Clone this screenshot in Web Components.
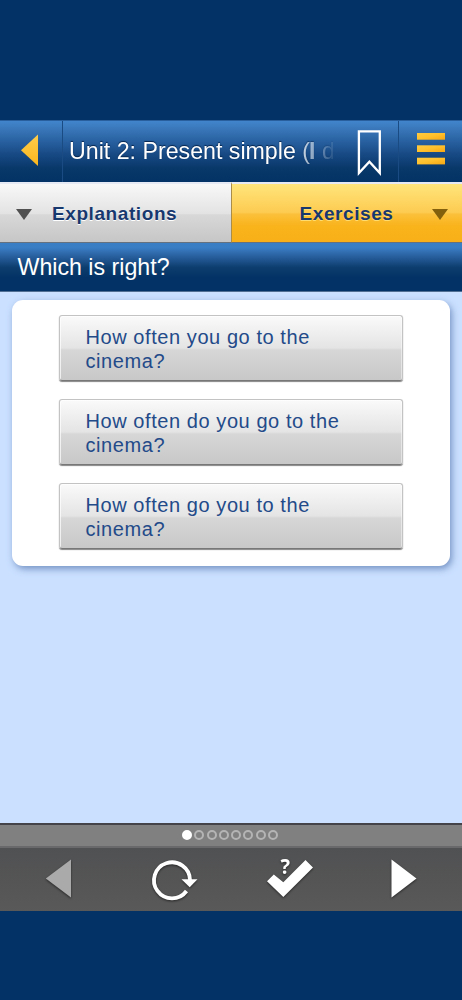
<!DOCTYPE html>
<html lang="en">
<head>
<meta charset="utf-8">
<title>Unit 2: Present simple</title>
<style>
html,body{margin:0;height:100%;background:#033366}
body{font-family:"Liberation Sans",Arial,sans-serif;overflow:hidden}
</style>
</head>
<body>
<grammar-app></grammar-app>
<script>
function define(name, html){
  const t = document.createElement('template');
  t.innerHTML = html;
  customElements.define(name, class extends HTMLElement{
    constructor(){
      super();
      this.attachShadow({mode:'open'}).append(t.content.cloneNode(true));
    }
  });
}

define('unit-header', `
<style>
:host{display:grid;grid-template-columns:62px 1fr 63px;height:62px;box-sizing:border-box;color:#fff;
 border-top:1px solid #2a5f9e;
 background:linear-gradient(#4285cc 0,#3a78bb 12%,#2962a2 32%,#164882 56%,#083769 78%,#033366 100%)}
.cell{display:flex;align-items:center}
.mid{border-left:1px solid #1a4b83;border-right:1px solid #1a4b83;padding-left:6px;min-width:0}
.title{width:264px;overflow:hidden;white-space:nowrap;font-size:23.2px;line-height:30px;margin-top:-1px;
 text-shadow:0 -1px 1px #04234b;
 -webkit-mask-image:linear-gradient(90deg,#000 225px,rgba(0,0,0,.6) 240px,transparent 268px);
 mask-image:linear-gradient(90deg,#000 225px,rgba(0,0,0,.6) 240px,transparent 268px)}
svg{display:block;flex:none}
</style>
<div class="cell"><svg width="62" height="61" viewBox="0 0 62 61">
<defs><linearGradient id="a" x2="0" y2="1"><stop stop-color="#ffcd4c"/><stop offset="1" stop-color="#fbb61c"/></linearGradient></defs>
<path d="M38 13.500V45L21 29.300Z" fill="url(#a)"/></svg></div>
<div class="cell mid"><div class="title"><slot></slot></div>
<svg width="64" height="61" viewBox="-3.700 0 64 61"><path d="M22.200 10.400H43.100V52L32.700 40.800L22.200 52Z" fill="none" stroke="#fff" stroke-width="2.300"/></svg></div>
<div class="cell"><svg width="63" height="61" viewBox="0 0 63 61">
<defs><linearGradient id="b" x2="1" y2="1"><stop stop-color="#ffcb42"/><stop offset=".5" stop-color="#ffc02c"/><stop offset="1" stop-color="#f6a713"/></linearGradient></defs>
<g fill="url(#b)"><rect x="18" y="12" width="28" height="6.700"/><rect x="18" y="24.300" width="28" height="6.700"/><rect x="18" y="36.700" width="28" height="6.700"/></g></svg></div>`);

define('mode-tab', `
<style>
:host{display:flex;align-items:center;box-sizing:border-box;height:61px;border-top:2px solid #e4e9f3;border-bottom:1px solid #65717f;
 color:#17386f;font-weight:bold;font-size:19px;letter-spacing:.58px;padding:0 13px 1px 16px;
 background:linear-gradient(#f8f8f8 0,#e3e3e3 51%,#d8d8d8 53%,#c6c6c6 100%);text-shadow:0 1px 0 #fff}
:host([active]){flex-direction:row-reverse;border-left:1px solid #a98d48;padding:0 14px 1px 0;
 background:linear-gradient(#ffe57b 0,#fdcb51 49%,#fbc03a 52%,#f9b31b 73%,#f9b018 100%);text-shadow:0 1px 0 #ffdc70}
svg{width:16px;height:11px;fill:#505050;margin:3px 20px 0 0}
:host([active]) svg{fill:#83600c;margin:3px 0 0 38.500px}
span{line-height:24px;margin-top:2px}
</style>
<svg viewBox="0 0 16 11"><path d="M0 0H16L8 11Z"/></svg><span><slot></slot></span>`);

define('mode-tabs', `
<style>:host{display:grid;grid-template-columns:231px 231px}</style>
<slot></slot>`);

define('question-bar', `
<style>:host{display:flex;align-items:center;box-sizing:border-box;height:49px;padding:0 17.500px;color:#fff;font-size:23.2px;
 border-bottom:1px solid #526f94;background:linear-gradient(#397fc5 0,#3a7dc3 10%,#2961a0 27%,#0d3d6e 51%,#033366 72%,#033366 100%)}</style>
<slot></slot>`);

define('answer-option', `
<style>:host{display:block;box-sizing:border-box;width:344px;height:66px;padding:9px 26px;border-radius:3px;
 border:1px solid #c3c3c3;border-bottom:1px solid #777;color:#234a89;font-size:20px;line-height:24px;letter-spacing:.57px;
 background:linear-gradient(#fafafa 0,#e4e4e4 50%,#d7d7d7 53%,#c8c8c8 100%);
 box-shadow:inset 1px 1px 0 rgba(255,255,255,.7),inset -1px 0 0 rgba(255,255,255,.45),0 1px 1px #858585}</style>
<slot></slot>`);

define('answer-card', `
<style>:host{display:flex;flex-direction:column;align-items:center;gap:18px;box-sizing:border-box;margin:8px 12px 0;height:266px;padding-top:15px;
 background:#fff;border-radius:11px;box-shadow:2px 3px 7px #7593c4}
::slotted(*){flex:none;margin-left:-1px}</style>
<slot></slot>`);

define('page-dots', `
<style>:host{display:flex;justify-content:center;align-items:center;box-sizing:border-box;height:25px;border-top:2px solid #444349;border-bottom:2px solid #69696b;
 gap:2.240px;background:#808080;padding:0 2px 2px 0}
i{box-sizing:border-box;width:10px;height:10px;border-radius:50%;border:2px solid #b4b4b4}
i:first-of-type{background:#fff;border-color:#fff}</style>
<i></i><i></i><i></i><i></i><i></i><i></i><i></i><i></i>`);

define('nav-toolbar', `
<style>:host{display:grid;grid-template-columns:repeat(4,1fr);height:63px;background:linear-gradient(#505153,#555 55%,#595959)}
svg{display:block;width:115.500px;height:63px;overflow:visible}
.s{filter:drop-shadow(0 1px 1px rgba(0,0,0,.55))}</style>
<svg viewBox="0 0 115.500 63"><path class="s" d="M71 11.500V49.500L45.800 30.500Z" fill="#aaa"/></svg>
<svg viewBox="115.500 0 115.500 63"><g class="s"><path d="M186 43A18 18 0 1 1 189.500 32" fill="none" stroke="#fff" stroke-width="3.800"/><path d="M181 31.200H197L189.200 39.200Z" fill="#fff"/></g></svg>
<svg viewBox="231 0 115.500 63"><g class="s" fill="#fff"><path d="M267 33.300L273.800 26.500L283.300 34.300L305.500 12L313 19.500L283.300 49Z"/><text x="280.600" y="25.800" font-size="21.500" font-weight="bold" font-family="Noto Sans,sans-serif" textLength="9.500" lengthAdjust="spacingAndGlyphs">?</text></g></svg>
<svg viewBox="346.500 0 115.500 63"><path class="s" d="M391 11.500V49.500L416 30.500Z" fill="#fff"/></svg>`);

define('grammar-app', `
<style>:host{display:flex;flex-direction:column;box-sizing:border-box;width:462px;height:1000px;padding:120px 0 89px}
main{flex:1;background:#cbe0ff;overflow:hidden}
unit-header,mode-tabs,question-bar,page-dots,nav-toolbar{flex:none}
b{margin:0 0 0 -1px}</style>
<unit-header>Unit 2: Present simple (<b>I</b> do)</unit-header>
<mode-tabs><mode-tab>Explanations</mode-tab><mode-tab active>Exercises</mode-tab></mode-tabs>
<question-bar>Which is right?</question-bar>
<main><answer-card>
<answer-option>How often you go to the cinema?</answer-option>
<answer-option>How often do you go to the cinema?</answer-option>
<answer-option>How often go you to the cinema?</answer-option>
</answer-card></main>
<page-dots></page-dots>
<nav-toolbar></nav-toolbar>`);
</script>
</body>
</html>
